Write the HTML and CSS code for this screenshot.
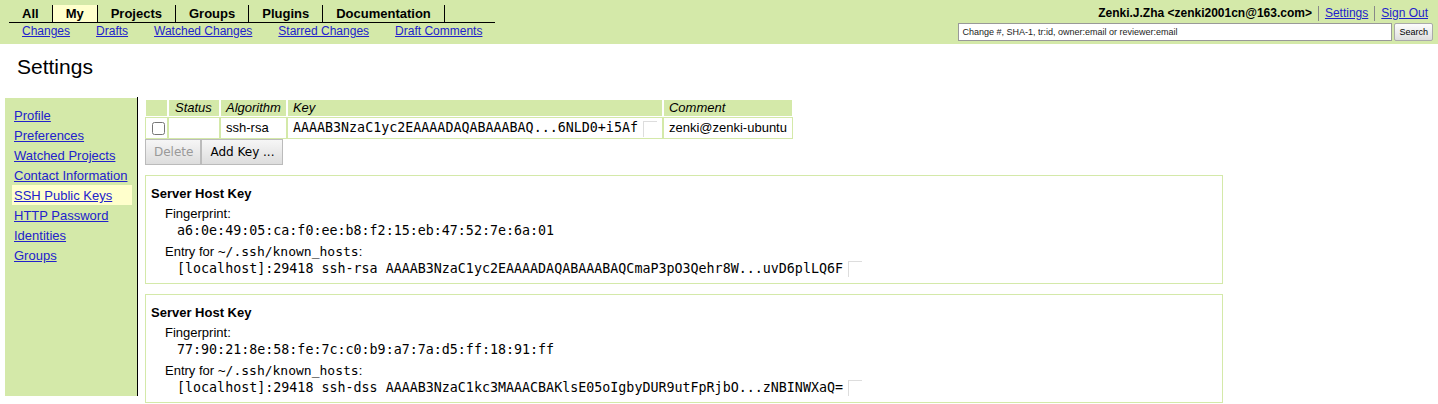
FILE: index.html
```html
<!DOCTYPE html>
<html>
<head>
<meta charset="utf-8">
<title>Settings</title>
<link rel="stylesheet" href="styles.css">
</head>
<body>
<div class="topbar">
  <div class="menus">
    <div class="tabs">
      <span class="tab">All</span><span class="tab sel">My</span><span class="tab">Projects</span><span class="tab">Groups</span><span class="tab">Plugins</span><span class="tab">Documentation</span>
    </div>
    <div class="submenu">
      <a href="#">Changes</a><a href="#">Drafts</a><a href="#">Watched Changes</a><a href="#">Starred Changes</a><a href="#">Draft Comments</a>
    </div>
  </div>
  <div class="account">
    <div class="userline">
      <span class="user">Zenki.J.Zha &lt;zenki2001cn@163.com&gt;</span><span class="sep"></span><a href="#">Settings</a><span class="sep"></span><a href="#">Sign Out</a>
    </div>
    <div class="searchrow">
      <input class="searchbox" type="text" value="Change #, SHA-1, tr:id, owner:email or reviewer:email"><button class="searchbtn">Search</button>
    </div>
  </div>
</div>

<h1 class="title">Settings</h1>

<div class="settings">
  <div class="navcol">
    <ul class="nav">
      <li><a href="#">Profile</a></li>
      <li><a href="#">Preferences</a></li>
      <li><a href="#">Watched Projects</a></li>
      <li><a href="#">Contact Information</a></li>
      <li class="sel"><a href="#">SSH Public Keys</a></li>
      <li><a href="#">HTTP Password</a></li>
      <li><a href="#">Identities</a></li>
      <li><a href="#">Groups</a></li>
    </ul>
  </div>
  <div class="content">
    <table class="keys">
      <thead>
        <tr>
          <th class="c-check"></th>
          <th class="c-status">Status</th>
          <th>Algorithm</th>
          <th>Key</th>
          <th>Comment</th>
        </tr>
      </thead>
      <tbody>
        <tr>
          <td class="c-check"><input class="cb" type="checkbox"></td>
          <td></td>
          <td>ssh-rsa</td>
          <td><span class="mono">AAAAB3NzaC1yc2EAAAADAQABAAABAQ...6NLD0+i5Af</span><span class="copy"></span></td>
          <td>zenki@zenki-ubuntu</td>
        </tr>
      </tbody>
    </table>
    <div class="actions">
      <button class="btn" disabled>Delete</button><button class="btn">Add Key ...</button>
    </div>

    <div class="hostkey">
      <div class="hk-title">Server Host Key</div>
      <div class="hk-label">Fingerprint:</div>
      <div class="hk-data mono">a6:0e:49:05:ca:f0:ee:b8:f2:15:eb:47:52:7e:6a:01</div>
      <div class="hk-label hk-entry-label">Entry for <span class="path">~/.ssh/known_hosts</span>:</div>
      <div class="hk-data hk-entry"><span class="mono">[localhost]:29418 ssh-rsa AAAAB3NzaC1yc2EAAAADAQABAAABAQCmaP3pO3Qehr8W...uvD6plLQ6F</span><span class="copy"></span></div>
    </div>

    <div class="hostkey">
      <div class="hk-title">Server Host Key</div>
      <div class="hk-label">Fingerprint:</div>
      <div class="hk-data mono">77:90:21:8e:58:fe:7c:c0:b9:a7:7a:d5:ff:18:91:ff</div>
      <div class="hk-label hk-entry-label">Entry for <span class="path">~/.ssh/known_hosts</span>:</div>
      <div class="hk-data hk-entry"><span class="mono">[localhost]:29418 ssh-dss AAAAB3NzaC1kc3MAAACBAKlsE05oIgbyDUR9utFpRjbO...zNBINWXaQ=</span><span class="copy"></span></div>
    </div>
  </div>
</div>
</body>
</html>
```

FILE: styles.css
```css
body {
  margin: 0;
  font-family: "Liberation Sans", Arial, sans-serif;
  font-size: 13px;
  color: #000;
  background: #fff;
}

a {
  color: #2222cc;
}

/* ---------- top bar ---------- */
.topbar {
  display: flex;
  justify-content: space-between;
  background: #d4e9a9;
  height: 44px;
  box-sizing: border-box;
}

.menus {
  padding: 5px 0 0 9px;
}

.tabs {
  display: flex;
  width: 486px;
  border-bottom: 1px solid #000;
}

.tab {
  font-weight: bold;
  line-height: 17px;
  padding: 0 13px;
  border-right: 1px solid #000;
  color: #000;
}

.tab.sel {
  background: #ffffcc;
}

.submenu {
  display: flex;
  line-height: 16px;
  font-size: 12px;
}

.submenu a {
  padding: 0 13px;
}

.account {
  display: flex;
  flex-direction: column;
  align-items: flex-end;
  padding: 5px 5px 0 0;
}

.userline {
  display: flex;
  align-items: center;
  line-height: 17px;
  padding-right: 5px;
  font-size: 12px;
}

.user {
  font-weight: bold;
}

.sep {
  width: 1px;
  height: 15px;
  background: #888;
  margin: 0 6px;
}

.searchrow {
  display: flex;
  margin-top: 1px;
}

.searchbox {
  width: 434px;
  height: 18px;
  box-sizing: border-box;
  border: 1px solid #999;
  margin: 0;
  padding: 0 3px;
  font-family: "Liberation Sans", Arial, sans-serif;
  font-size: 9px;
  color: #222;
  background: #fff;
}

.searchbtn {
  height: 18px;
  margin: 0 0 0 2px;
  padding: 0 4px;
  font-family: "Liberation Sans", Arial, sans-serif;
  font-size: 9px;
  color: #000;
  border: 1px solid #aaa;
  border-radius: 2px;
  background: linear-gradient(#fdfdfd, #dedede);
}

/* ---------- title ---------- */
.title {
  margin: 0;
  padding: 11px 0 0 17px;
  font-size: 21px;
  font-weight: normal;
  line-height: 24px;
}

/* ---------- layout ---------- */
.settings {
  display: flex;
  align-items: flex-start;
  margin-top: 18px;
  padding-left: 5px;
}

.navcol {
  border-right: 1px solid #000;
  height: 299px;
  box-sizing: border-box;
  padding-top: 1px;
}

.nav {
  list-style: none;
  margin: 0;
  padding: 7px 5px 0 7px;
  width: 132px;
  height: 298px;
  box-sizing: border-box;
  background: #d4e9a9;
}

.nav li {
  line-height: 20px;
  padding: 1px 0 0 2px;
  height: 20px;
  box-sizing: border-box;
}

.nav li.sel {
  background: #ffffcc;
}

.content {
  margin-left: 7px;
  padding-top: 2px;
}

/* ---------- key table ---------- */
.keys {
  border-collapse: separate;
  border-spacing: 0;
}

.keys th {
  background: #d4e9a9;
  font-style: italic;
  font-weight: normal;
  text-align: left;
  padding: 0 5px;
  line-height: 16px;
  border: 1px solid #fff;
}

.keys td {
  border: 1px solid #d4e9a9;
  padding: 2px 5px 1px;
  line-height: 16px;
  white-space: nowrap;
}

.keys .c-check {
  padding-left: 6px;
  padding-right: 2px;
  width: 13px;
}

.keys th.c-status {
  width: 39px;
  padding-left: 6px;
}

.cb {
  margin: 0;
  width: 13px;
  height: 13px;
  vertical-align: middle;
}

.mono {
  font-family: "DejaVu Sans Mono", "Liberation Mono", monospace;
  font-size: 13.33px;
}

.path {
  font-family: "DejaVu Sans Mono", "Liberation Mono", monospace;
  font-size: 13px;
}

.copy {
  display: inline-block;
  width: 14px;
  height: 16px;
  box-sizing: border-box;
  border-top: 1px solid #ddd;
  border-left: 1px solid #ddd;
  vertical-align: middle;
  margin-left: 5px;
}

.actions {
  display: flex;
}

.btn {
  font-family: "DejaVu Sans", sans-serif;
  font-size: 12px;
  height: 26px;
  margin: 0;
  padding: 0 7px 0 8px;
  border: 1px solid #bbb;
  background: linear-gradient(#f6f6f6, #dddddd);
  color: #000;
}

.btn:disabled {
  color: #999;
}

/* ---------- host key panels ---------- */
.hostkey {
  width: 1078px;
  box-sizing: border-box;
  border: 1px solid #d4e9a9;
  margin-top: 10px;
  padding: 10px 5px 5px;
}

.hk-title {
  font-weight: bold;
  line-height: 16px;
  margin-bottom: 4px;
}

.hk-label {
  padding-left: 14px;
  line-height: 16px;
}

.hk-data {
  padding-left: 26px;
  line-height: 17px;
  white-space: nowrap;
}

.hk-entry-label {
  margin-top: 5px;
}

.hk-entry {
  line-height: 18px;
}
```
